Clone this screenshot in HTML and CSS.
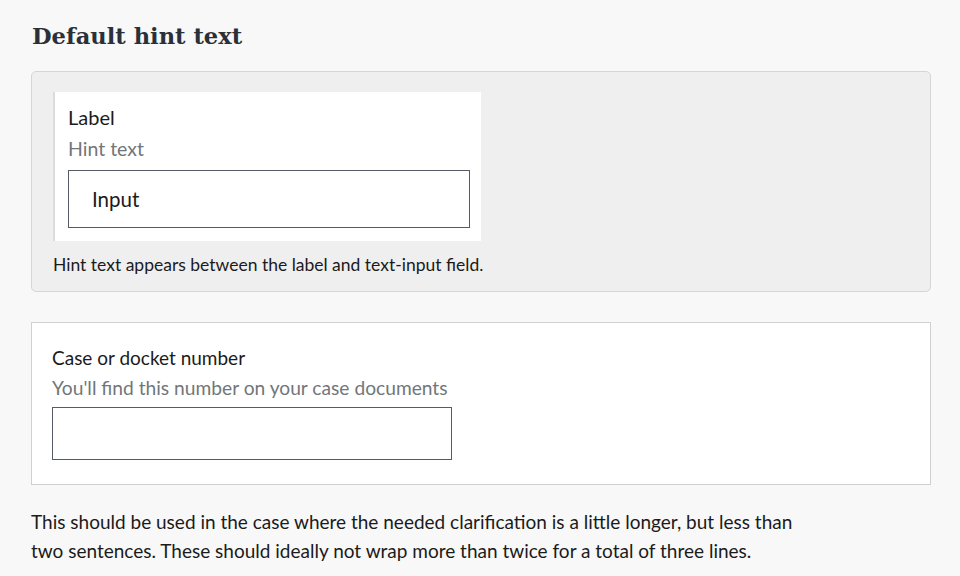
FILE: index.html
```html
<!DOCTYPE html>
<html lang="en">
<head>
<meta charset="utf-8">
<title>Default hint text</title>
<link rel="stylesheet" href="styles.css">
</head>
<body>
<main class="page">
  <h1 class="title">Default hint text</h1>
  <section class="example">
    <div class="preview">
      <div class="field-label">Label</div>
      <div class="field-hint">Hint text</div>
      <div class="field-input">Input</div>
    </div>
    <p class="caption">Hint text appears between the label and text-input field.</p>
  </section>
  <section class="card">
    <label class="card-label" for="docket">Case or docket number</label>
    <div class="card-hint">You'll find this number on your case documents</div>
    <input class="card-input" id="docket" type="text">
  </section>
  <p class="body-text">This should be used in the case where the needed clarification is a little longer, but less than two sentences. These should ideally not wrap more than twice for a total of three lines.</p>
</main>
</body>
</html>
```
FILE: styles.css
```css
html, body {
  margin: 0;
  padding: 0;
  background: #f8f8f8;
}
.page {
  padding: 0 29px 0 31px;
  font-family: Lato, "Open Sans", sans-serif;
  color: #1b1b1b;
}
.title {
  margin: 0;
  padding-top: 22px;
  padding-left: 1px;
  height: 71px;
  box-sizing: border-box;
  font-family: "DejaVu Serif", serif;
  font-weight: bold;
  font-size: 22.6px;
  line-height: 28px;
  color: #2a3039;
}
.example {
  box-sizing: border-box;
  height: 221px;
  border: 1px solid #d6d6d6;
  border-radius: 5px;
  background: #efefef;
  padding: 20px 21px 0;
}
.preview {
  box-sizing: border-box;
  width: 428px;
  height: 149px;
  background: #fff;
  border-left: 2px solid #dcdcdc;
  padding: 12px 11px 0 13px;
}
.field-label {
  font-size: 20px;
  line-height: 26px;
  color: #1b1b1b;
}
.field-hint {
  font-size: 19.5px;
  line-height: 26px;
  margin-top: 6px;
  color: #71767a;
}
.field-input {
  box-sizing: border-box;
  height: 58px;
  margin-top: 8px;
  border: 1px solid #565c65;
  padding: 15px 23px 0;
  font-size: 20.5px;
  line-height: 26px;
}
.caption {
  margin: 12px 0 0;
  font-size: 17.5px;
  line-height: 24px;
  color: #1b1b1b;
}
.card {
  box-sizing: border-box;
  height: 163px;
  margin-top: 30px;
  background: #fff;
  border: 1px solid #d0d0d0;
  padding: 22px 20px 0;
}
.card-label {
  display: block;
  font-size: 19px;
  line-height: 26px;
  color: #1b1b1b;
}
.card-hint {
  font-size: 19.2px;
  line-height: 26px;
  margin-top: 4px;
  color: #71767a;
}
.card-input {
  display: block;
  box-sizing: border-box;
  width: 400px;
  height: 53px;
  margin: 6px 0 0;
  border: 1px solid #565c65;
  border-radius: 0;
  background: #fff;
  font: inherit;
}
.body-text {
  margin: 22px 0 0;
  max-width: 780px;
  font-size: 19px;
  line-height: 29px;
  color: #1b1b1b;
}
```
